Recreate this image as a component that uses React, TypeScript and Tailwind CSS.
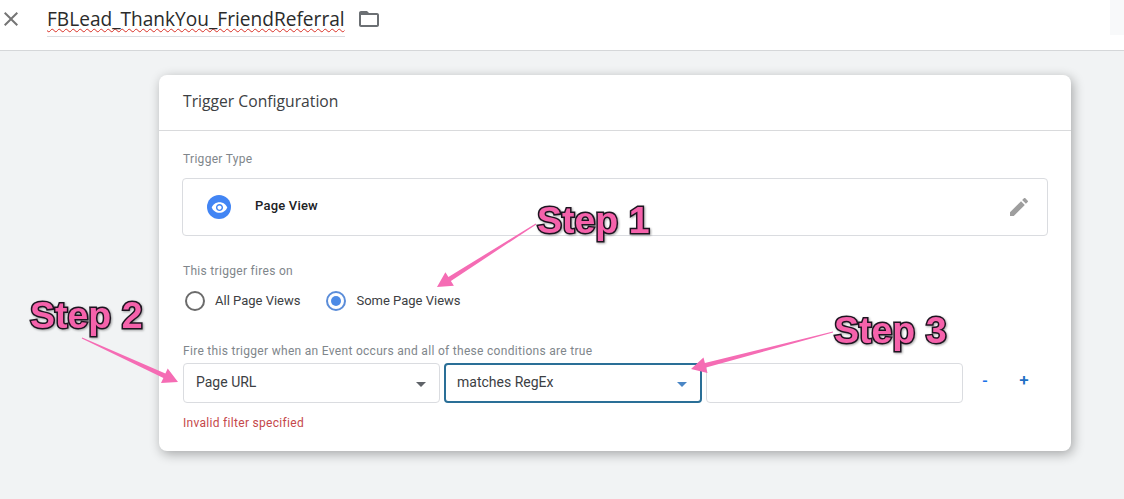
import React from "react";

// Material paths for the few icons on the page
const paths = {
  close:
    "M19 6.41L17.59 5 12 10.59 6.41 5 5 6.41 10.59 12 5 17.59 6.41 19 12 13.41 17.59 19 19 17.59 13.41 12z",
  folder:
    "M20 6h-8l-2-2H4c-1.1 0-1.99.9-1.99 2L2 18c0 1.1.9 2 2 2h16c1.1 0 2-.9 2-2V8c0-1.1-.9-2-2-2zm0 12H4V8h16v10z",
  eye: "M12 4.5C7 4.5 2.73 7.61 1 12c1.73 4.39 6 7.5 11 7.5s9.27-3.11 11-7.5c-1.73-4.39-6-7.5-11-7.5zM12 17c-2.76 0-5-2.24-5-5s2.24-5 5-5 5 2.24 5 5-2.24 5-5 5zm0-8c-1.66 0-3 1.34-3 3s1.34 3 3 3 3-1.34 3-3-1.34-3-3-3z",
  edit: "M3 17.25V21h3.75L17.81 9.94l-3.75-3.75L3 17.25zM20.71 7.04c.39-.39.39-1.02 0-1.41l-2.34-2.34c-.39-.39-1.02-.39-1.41 0l-1.83 1.83 3.75 3.75 1.83-1.83z",
};

const Icon = ({ d, className }: { d: string; className: string }) => (
  <svg viewBox="0 0 24 24" fill="currentColor" className={className}>
    <path d={d} />
  </svg>
);

const Caret = ({ className }: { className: string }) => (
  <svg viewBox="0 0 10 5" fill="currentColor" className={`w-[10px] h-[5px] ${className}`}>
    <path d="M0 0h10L5 5z" />
  </svg>
);

// Tapered annotation arrow, thin at the tail and with a triangular head
const arrowPoints = (x1: number, y1: number, x2: number, y2: number) => {
  const len = Math.hypot(x2 - x1, y2 - y1);
  const ux = (x2 - x1) / len;
  const uy = (y2 - y1) / len;
  const nx = -uy;
  const ny = ux;
  const bx = x2 - ux * 15;
  const by = y2 - uy * 15;
  const pts = [
    [x1 + nx * 0.5, y1 + ny * 0.5],
    [bx + nx * 2.4, by + ny * 2.4],
    [bx + nx * 8, by + ny * 8],
    [x2, y2],
    [bx - nx * 8, by - ny * 8],
    [bx - nx * 2.4, by - ny * 2.4],
    [x1 - nx * 0.5, y1 - ny * 0.5],
  ];
  return pts.map((p) => `${p[0].toFixed(1)},${p[1].toFixed(1)}`).join(" ");
};

const StepLabel = ({ text, className }: { text: string; className: string }) => (
  <span
    className={`absolute font-['Liberation_Sans',sans-serif] font-bold text-[37.5px] leading-[40px] text-[#f562ab] [-webkit-text-stroke:3px_#1d1420] [paint-order:stroke_fill] drop-shadow-[1px_1px_1px_rgba(0,0,0,0.35)] whitespace-nowrap ${className}`}
  >
    {text}
  </span>
);

const Radio = ({ label, checked }: { label: string; checked?: boolean }) => (
  <label className="flex items-center gap-[10px]">
    <span
      className={`w-5 h-5 rounded-full border-2 flex items-center justify-center ${
        checked ? "border-[#5b8dd9]" : "border-[#6b6b6b]"
      }`}
    >
      {checked && <span className="w-[10px] h-[10px] rounded-full bg-[#4d8be6]" />}
    </span>
    <span className="text-[13px] text-[#3c4043]">{label}</span>
  </label>
);

export default function App() {
  return (
    <div className="relative w-[1124px] h-[499px] overflow-hidden bg-[#f1f3f4] font-['Roboto',sans-serif]">
      <header className="h-[51px] bg-white border-b border-[#d5d7d9] flex items-start">
        <button className="ml-[-1px] mt-[7px] text-[#757575]">
          <Icon d={paths.close} className="w-6 h-6" />
        </button>
        <div className="ml-6 mt-[7px] h-[30px] border-b border-[#dadce0] font-['Open_Sans',sans-serif] text-[19.1px] leading-[25px] text-[#2b2b2b] underline decoration-wavy decoration-[#d93025] decoration-1 underline-offset-2 whitespace-nowrap">
          FBLead_ThankYou_FriendReferral
        </div>
        <Icon d={paths.folder} className="w-6 h-6 ml-3 mt-[7px] text-[#6b6f73]" />
        <div className="ml-auto w-[14px] h-[35px] bg-[#f8f9fa]" />
      </header>

      <main className="ml-[159px] mt-6 w-[912px] h-[376px] bg-white rounded-lg shadow-[2px_3px_12px_rgba(0,0,0,0.32)]">
        <div className="h-[56px] border-b border-[#d9dadc] pl-6 pb-[2px] flex items-center font-['Open_Sans',sans-serif] text-[15.7px] text-[#3c4043]">
          Trigger Configuration
        </div>

        <div className="pl-6 pr-[23px]">
          <div className="pt-[21px] text-[12px] leading-[14px] text-[#80868b] tracking-[0.3px]">Trigger Type</div>
          <div className="mt-[12px] -ml-px h-[58px] border border-[#dadce0] rounded flex items-center">
            <span className="ml-6 w-6 h-6 rounded-full bg-[#4285f4] flex items-center justify-center text-white">
              <Icon d={paths.eye} className="w-[17px] h-[17px]" />
            </span>
            <span className="ml-6 -mt-[2px] text-[13px] font-medium text-[#202124] tracking-[0.2px]">Page View</span>
            <Icon d={paths.edit} className="w-6 h-6 ml-auto mr-[16px] text-[#9e9e9e]" />
          </div>

          <div className="mt-[28px] text-[12px] leading-[14px] text-[#80868b] tracking-[0.3px]">This trigger fires on</div>
          <div className="mt-[13px] ml-[2px] flex items-center gap-[26px]">
            <Radio label="All Page Views" />
            <Radio label="Some Page Views" checked />
          </div>

          <div className="mt-[33px] text-[12px] leading-[14px] text-[#80868b] tracking-[0.3px]">
            Fire this trigger when an Event occurs and all of these conditions are true
          </div>
          <div className="mt-[5px] flex items-center">
            <div className="w-[257px] h-10 border border-[#dadce0] rounded flex items-center pl-3 pr-[13px] pb-[2px] text-[14px] text-[#3c4043]">
              Page URL
              <Caret className="ml-auto mt-[4px] text-[#5f6368]" />
            </div>
            <div className="ml-1 w-[258px] h-10 border-2 border-[#2a6f97] rounded flex items-center pl-[11px] pr-[13px] pb-[2px] text-[14px] text-[#3c4043]">
              matches RegEx
              <Caret className="ml-auto mt-[4px] text-[#4a86c5]" />
            </div>
            <div className="ml-1 w-[257px] h-10 border border-[#dadce0] rounded" />
            <button className="ml-[18px] w-[8px] -mt-[4px] text-[16px] font-medium text-[#1a73e8] text-center">-</button>
            <button className="ml-[31px] w-[8px] -mt-[4px] text-[17px] font-medium text-[#1f6fc4] flex justify-center">+</button>
          </div>
          <div className="mt-[13px] text-[12px] leading-[14px] text-[#c5484a] tracking-[0.3px]">Invalid filter specified</div>
        </div>
      </main>

      {/* annotations drawn on top of the screenshot */}
      <svg viewBox="0 0 1124 499" className="absolute inset-0 w-[1124px] h-[499px] pointer-events-none" fill="#f56cb4">
        <polygon points={arrowPoints(536, 224, 437, 287)} />
        <polygon points={arrowPoints(82, 338, 178, 382)} />
        <polygon points={arrowPoints(833, 332, 691, 369)} />
      </svg>
      <StepLabel text="Step 1" className="left-[537px] top-[200px]" />
      <StepLabel text="Step 2" className="left-[30px] top-[295px]" />
      <StepLabel text="Step 3" className="left-[834px] top-[310px]" />
    </div>
  );
}
